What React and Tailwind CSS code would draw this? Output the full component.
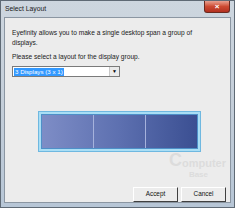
const font = { fontFamily: '"Liberation Sans", Arial, sans-serif' };

const Btn = ({ children }) => (
  <button className="w-[45px] h-[15px] bg-[#ececec] border border-t-white border-l-white border-r-[#404040] border-b-[#404040] text-[6.4px] text-[#111] leading-none flex items-center justify-center">
    {children}
  </button>
);

export default function App() {
  return (
    <div
      style={font}
      className="w-[235px] h-[208px] flex flex-col bg-gradient-to-b from-[#cdd6df] via-[#c4ced9] to-[#b7c6d6] border border-[#5f6a75] overflow-hidden"
    >
      {/* title bar */}
      <div className="h-[16px] shrink-0 flex items-start justify-between pl-[4px] pr-[4px]">
        <span className="text-[6.8px] text-[#1a1a1a] mt-[3px]">Select Layout</span>
        <div className="w-[26px] h-[12px] rounded-b-[3px] bg-gradient-to-b from-[#e8a090] via-[#cc4a32] to-[#b33020] border border-[#6a2a20] border-t-0 flex items-center justify-center text-white text-[8px] font-bold leading-none">
          ×
        </div>
      </div>

      {/* client area */}
      <div className="relative flex-1 mx-[3px] mb-[4px] bg-[#ececec] border border-[#8b96a2] text-[#1a1a1a] text-[6.6px] leading-[10px] pl-[7px] pt-[10px] pr-[4px] flex flex-col">
        <p className="whitespace-nowrap">Eyefinity allows you to make a single desktop span a group of</p>
        <p>displays.</p>
        <p className="mt-[4px]">Please select a layout for the display group.</p>

        <div className="mt-[4px] w-[108px] h-[11px] bg-white border border-[#7a7a7a] flex items-center pl-[1px]">
          <span className="bg-[#3399ff] text-white leading-[8px] px-[1px] text-[6.2px]">3 Displays (3 x 1)</span>
          <div className="ml-auto w-[10px] h-[9px] bg-[#eaeaea] border-l border-[#c8c8c8] flex items-center justify-center text-[5px] leading-none text-black">
            ▼
          </div>
        </div>

        <div className="mt-[34px] ml-[26px] w-[163px] h-[41px] border border-[#6fb8e0] bg-[#a9def5] p-[2px]">
          <div className="w-full h-full border border-[#4e90c8] flex bg-gradient-to-r from-[#7e8dc6] via-[#5d70b0] to-[#3b4f92]">
            <div className="flex-1 border-r border-[#a6b2dc]" />
            <div className="flex-1 border-r border-[#a6b2dc]" />
            <div className="flex-1" />
          </div>
        </div>

        <div className="absolute right-[4px] top-[133px] h-[18px] flex items-end text-[#dcdcdc] font-bold text-[11px] leading-none">
          <span className="text-[18px] leading-none">C</span>
          <span className="leading-none">omputer</span>
        </div>
        <div className="absolute right-[22px] top-[153px] text-[#dcdcdc] font-bold text-[8px] leading-none">
          Base
        </div>

        <div className="mt-auto flex justify-end gap-[3px] relative">
          <Btn>Accept</Btn>
          <Btn>Cancel</Btn>
        </div>
      </div>
    </div>
  );
}
